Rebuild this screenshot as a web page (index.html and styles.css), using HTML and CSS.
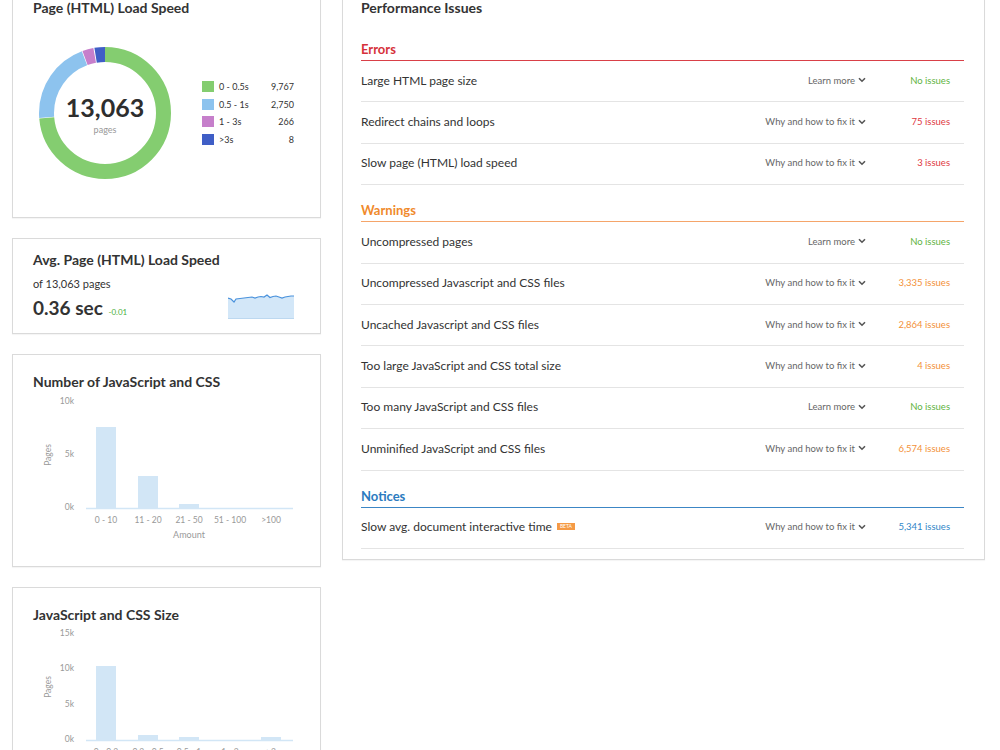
FILE: index.html
```html
<!DOCTYPE html>
<html lang="en">
<head>
	<meta charset="UTF-8">
	<title>Site Audit - Performance</title>
	<link rel="stylesheet" href="styles.css">
</head>
<body>
	<div class="page">
		<div class="left">
			<div class="card speed">
				<h2 class="card-title">Page (HTML) Load Speed</h2>
				<div class="donut-row">
					<svg class="donut" width="132" height="132" viewBox="0 0 132 132">
						<g transform="rotate(-90 66 66)" fill="none" stroke-width="15">
							<circle cx="66" cy="66" r="58.5" stroke="#84cd70" stroke-dasharray="270.2 367.6" stroke-dashoffset="0"/>
							<circle cx="66" cy="66" r="58.5" stroke="#8dc3ee" stroke-dasharray="75.2 367.6" stroke-dashoffset="-270.8"/>
							<circle cx="66" cy="66" r="58.5" stroke="#c67fcb" stroke-dasharray="10 367.6" stroke-dashoffset="-346.6"/>
							<circle cx="66" cy="66" r="58.5" stroke="#3f5ec6" stroke-dasharray="9.8 367.6" stroke-dashoffset="-357.5"/>
						</g>
						<text class="donut-num" x="66" y="64" text-anchor="middle">13,063</text>
						<text class="donut-sub" x="66" y="84" text-anchor="middle">pages</text>
					</svg>
					<ul class="legend">
						<li><span class="sw green"></span><span class="lbl">0 - 0.5s</span><span class="val">9,767</span></li>
						<li><span class="sw blue"></span><span class="lbl">0.5 - 1s</span><span class="val">2,750</span></li>
						<li><span class="sw purple"></span><span class="lbl">1 - 3s</span><span class="val">266</span></li>
						<li><span class="sw navy"></span><span class="lbl">&gt;3s</span><span class="val">8</span></li>
					</ul>
				</div>
			</div>

			<div class="card avg">
				<h2 class="card-title">Avg. Page (HTML) Load Speed</h2>
				<div class="avg-body">
					<div>
						<div class="avg-sub">of 13,063 pages</div>
						<div class="avg-val">0.36 sec <span class="delta">-0.01</span></div>
					</div>
					<svg class="spark" width="66" height="26" viewBox="0 0 66 26">
						<path d="M0 5 L3 6 L6 9 L8 6 L12 5.5 L16 5 L20 4.5 L24 4 L27 5 L30 4 L33 3.5 L36 4 L39 2 L42 4.5 L45 3.5 L48 3 L51 4 L54 5 L57 4 L60 3.5 L63 3 L66 3 L66 25 L0 25 Z" fill="#d3e7f8"/>
						<path d="M0 5 L3 6 L6 9 L8 6 L12 5.5 L16 5 L20 4.5 L24 4 L27 5 L30 4 L33 3.5 L36 4 L39 2 L42 4.5 L45 3.5 L48 3 L51 4 L54 5 L57 4 L60 3.5 L63 3 L66 3" fill="none" stroke="#4a92dc" stroke-width="1.2"/>
						<line x1="0" y1="25.5" x2="66" y2="25.5" stroke="#bcd8f0" stroke-width="1"/>
					</svg>
				</div>
			</div>

			<div class="card chart">
				<h2 class="card-title">Number of JavaScript and CSS</h2>
				<svg class="bars" width="267" height="160" viewBox="0 0 267 160">
					<g class="axis-lbl" text-anchor="end">
						<text x="41" y="10">10k</text>
						<text x="41" y="63">5k</text>
						<text x="41" y="116">0k</text>
					</g>
					<text class="axis-lbl" transform="translate(16 63) rotate(-90)" text-anchor="middle">Pages</text>
					<g fill="#d2e6f6">
						<rect x="63" y="35" width="20" height="81"/>
						<rect x="105" y="84" width="20" height="32"/>
						<rect x="146" y="112" width="20" height="4"/>
					</g>
					<line x1="53" y1="116.5" x2="260" y2="116.5" stroke="#d2e6f6" stroke-width="1.5"/>
					<g class="axis-lbl" text-anchor="middle">
						<text x="73" y="129">0 - 10</text>
						<text x="115" y="129">11 - 20</text>
						<text x="156" y="129">21 - 50</text>
						<text x="197" y="129">51 - 100</text>
						<text x="238" y="129">&gt;100</text>
						<text class="axis-name" x="156" y="144">Amount</text>
					</g>
				</svg>
			</div>

			<div class="card chart size">
				<h2 class="card-title">JavaScript and CSS Size</h2>
				<svg class="bars" width="267" height="160" viewBox="0 0 267 160">
					<g class="axis-lbl" text-anchor="end">
						<text x="41" y="9">15k</text>
						<text x="41" y="44">10k</text>
						<text x="41" y="80">5k</text>
						<text x="41" y="115">0k</text>
					</g>
					<text class="axis-lbl" transform="translate(16 62) rotate(-90)" text-anchor="middle">Pages</text>
					<g fill="#d2e6f6">
						<rect x="63" y="41" width="20" height="74"/>
						<rect x="105" y="110" width="20" height="5"/>
						<rect x="146" y="112" width="20" height="3"/>
						<rect x="228" y="112" width="20" height="3"/>
					</g>
					<line x1="53" y1="115.5" x2="260" y2="115.5" stroke="#d2e6f6" stroke-width="1.5"/>
					<g class="axis-lbl" text-anchor="middle">
						<text x="73" y="128">0 - 0.2</text>
						<text x="115" y="128">0.2 - 0.5</text>
						<text x="156" y="128">0.5 - 1</text>
						<text x="197" y="128">1 - 2</text>
						<text x="238" y="128">&gt;2</text>
					</g>
				</svg>
			</div>
		</div>

		<div class="card issues">
			<h2 class="card-title">Performance Issues</h2>

			<div class="sec errors">Errors</div>
			<div class="issue">
				<span class="name">Large HTML page size</span>
				<span class="act">Learn more <svg width="8" height="6" viewBox="0 0 8 6"><path d="M1 1.2 L4 4.2 L7 1.2" fill="none" stroke="#555" stroke-width="1.6"/></svg></span>
				<span class="status ok">No issues</span>
			</div>
			<div class="issue">
				<span class="name">Redirect chains and loops</span>
				<span class="act">Why and how to fix it <svg width="8" height="6" viewBox="0 0 8 6"><path d="M1 1.2 L4 4.2 L7 1.2" fill="none" stroke="#555" stroke-width="1.6"/></svg></span>
				<span class="status err">75 issues</span>
			</div>
			<div class="issue">
				<span class="name">Slow page (HTML) load speed</span>
				<span class="act">Why and how to fix it <svg width="8" height="6" viewBox="0 0 8 6"><path d="M1 1.2 L4 4.2 L7 1.2" fill="none" stroke="#555" stroke-width="1.6"/></svg></span>
				<span class="status err">3 issues</span>
			</div>

			<div class="sec warnings">Warnings</div>
			<div class="issue">
				<span class="name">Uncompressed pages</span>
				<span class="act">Learn more <svg width="8" height="6" viewBox="0 0 8 6"><path d="M1 1.2 L4 4.2 L7 1.2" fill="none" stroke="#555" stroke-width="1.6"/></svg></span>
				<span class="status ok">No issues</span>
			</div>
			<div class="issue">
				<span class="name">Uncompressed Javascript and CSS files</span>
				<span class="act">Why and how to fix it <svg width="8" height="6" viewBox="0 0 8 6"><path d="M1 1.2 L4 4.2 L7 1.2" fill="none" stroke="#555" stroke-width="1.6"/></svg></span>
				<span class="status warn">3,335 issues</span>
			</div>
			<div class="issue">
				<span class="name">Uncached Javascript and CSS files</span>
				<span class="act">Why and how to fix it <svg width="8" height="6" viewBox="0 0 8 6"><path d="M1 1.2 L4 4.2 L7 1.2" fill="none" stroke="#555" stroke-width="1.6"/></svg></span>
				<span class="status warn">2,864 issues</span>
			</div>
			<div class="issue">
				<span class="name">Too large JavaScript and CSS total size</span>
				<span class="act">Why and how to fix it <svg width="8" height="6" viewBox="0 0 8 6"><path d="M1 1.2 L4 4.2 L7 1.2" fill="none" stroke="#555" stroke-width="1.6"/></svg></span>
				<span class="status warn">4 issues</span>
			</div>
			<div class="issue">
				<span class="name">Too many JavaScript and CSS files</span>
				<span class="act">Learn more <svg width="8" height="6" viewBox="0 0 8 6"><path d="M1 1.2 L4 4.2 L7 1.2" fill="none" stroke="#555" stroke-width="1.6"/></svg></span>
				<span class="status ok">No issues</span>
			</div>
			<div class="issue">
				<span class="name">Unminified JavaScript and CSS files</span>
				<span class="act">Why and how to fix it <svg width="8" height="6" viewBox="0 0 8 6"><path d="M1 1.2 L4 4.2 L7 1.2" fill="none" stroke="#555" stroke-width="1.6"/></svg></span>
				<span class="status warn">6,574 issues</span>
			</div>

			<div class="sec notices">Notices</div>
			<div class="issue">
				<span class="name">Slow avg. document interactive time <span class="beta">BETA</span></span>
				<span class="act">Why and how to fix it <svg width="8" height="6" viewBox="0 0 8 6"><path d="M1 1.2 L4 4.2 L7 1.2" fill="none" stroke="#555" stroke-width="1.6"/></svg></span>
				<span class="status note">5,341 issues</span>
			</div>
		</div>
	</div>
</body>
</html>
```

FILE: styles.css
```css
*{padding:0;margin:0;}
body{
	font-family: Lato, "Open Sans", sans-serif;
	color:#333;
	background:#fff;
	overflow:hidden;
}
.page{
	display:flex;
	align-items:flex-start;
	gap:21px;
	padding-left:12px;
	margin-top:-22px;
}
.left{
	width:309px;
	display:flex;
	flex-direction:column;
	gap:20px;
}
.card{
	box-sizing:border-box;
	background:#fff;
	border:1px solid #dadada;
	box-shadow:0 1px 1px rgba(0,0,0,0.04);
	padding:20px;
}
.card-title{
	font-size:14px;
	line-height:18px;
	font-weight:700;
	color:#333;
}

/* donut */
.speed{
	height:240px;
}
.donut-row{
	display:flex;
	align-items:center;
	margin-top:30px;
}
.donut{
	display:block;
	margin-left:6px;
}
.donut-num{
	font-size:25px;
	font-weight:700;
	fill:#2e2e2e;
	dominant-baseline:middle;
}
.donut-sub{
	font-size:9px;
	fill:#999;
	dominant-baseline:middle;
}
.legend{
	list-style:none;
	margin-left:31px;
	width:92px;
	font-size:9px;
}
.legend li{
	display:flex;
	align-items:center;
	height:17.6px;
}
.sw{
	width:12px;
	height:11px;
	margin-right:5px;
}
.sw.green{background:#84cd70;}
.sw.blue{background:#8dc3ee;}
.sw.purple{background:#c67fcb;}
.sw.navy{background:#3f5ec6;}
.legend .val{
	margin-left:auto;
}

/* avg speed */
.avg{
	height:96px;
	padding-top:12px;
}
.avg-body{
	display:flex;
	justify-content:space-between;
	align-items:flex-end;
}
.avg-sub{
	font-size:11px;
	line-height:14px;
	margin-top:8px;
}
.avg-val{
	font-size:19px;
	line-height:22px;
	margin-top:6px;
	font-weight:700;
}
.delta{
	font-size:8px;
	font-weight:400;
	color:#4caf3c;
	margin-left:1px;
}
.spark{
	display:block;
	margin:0 6px 4px 0;
}

/* bar charts */
.chart{
	height:213px;
	padding-top:18px;
}
.chart.size{
	height:200px;
}
.bars{
	display:block;
	margin-top:1px;
}
.axis-lbl{
	font-size:8.5px;
	fill:#999;
	dominant-baseline:middle;
}
.axis-name{
	font-size:9px;
}

/* performance issues */
.issues{
	width:643px;
	padding:20px 20px 10px 18px;
}
.issues .card-title{
	margin-bottom:7px;
}
.sec{
	font-size:13px;
	line-height:18px;
	font-weight:700;
	padding:16px 0 2px;
	border-bottom:1px solid;
}
.sec.errors{color:#d6313a;border-color:#d94048;}
.sec.warnings{color:#f08a2c;border-color:#f5a56a;}
.sec.notices{color:#2b7bc0;border-color:#3c86c5;}
.issue{
	box-sizing:border-box;
	display:flex;
	align-items:center;
	height:41.4px;
	padding-bottom:2px;
	border-bottom:1px solid #e4e4e4;
	font-size:12px;
}
.issue .name{
	flex:1;
	display:flex;
	align-items:center;
}
.beta{
	display:inline-block;
	background:#f59a45;
	color:#fff;
	font-size:5px;
	line-height:7px;
	padding:0 3px;
	margin-left:5px;
}
.act{
	font-size:9.5px;
	color:#666;
	display:flex;
	align-items:center;
	gap:3px;
}
.status{
	width:70px;
	text-align:right;
	margin:0 14px;
	font-size:9.5px;
}
.status.ok{color:#5fb342;}
.status.err{color:#e0393f;}
.status.warn{color:#f39138;}
.status.note{color:#2f86c8;}
```
